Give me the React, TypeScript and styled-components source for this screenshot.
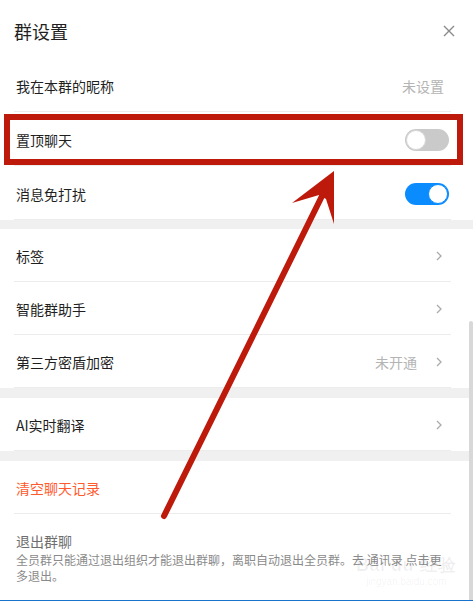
import React from "react";
import styled, { createGlobalStyle } from "styled-components";

const GlobalStyle = createGlobalStyle`
  html, body { margin: 0; padding: 0; background: #fff; }
  body { font-family: "Noto Sans CJK SC", "Noto Sans", sans-serif; }
`;

const Page = styled.div`
  position: relative;
  width: 473px;
  height: 601px;
  overflow: hidden;
  background: #fff;
  display: flex;
  flex-direction: column;
`;

const Header = styled.header`
  height: 58px;
  box-sizing: border-box;
  padding: 4px 18px 0 14px;
  display: flex;
  align-items: center;
  justify-content: space-between;
`;

const Title = styled.h1`
  margin: 0;
  font-size: 18px;
  font-weight: 400;
  line-height: 24px;
  color: #1f1f1f;
`;

const CloseButton = styled.button`
  border: 0;
  background: none;
  padding: 0;
  width: 12px;
  height: 12px;
  display: flex;
  cursor: pointer;
`;

const Section = styled.section`
  background: #fff;
  display: flex;
  flex-direction: column;
`;

const Band = styled.div<{ $h: number }>`
  height: ${(p) => p.$h}px;
  background: #f0f0f0;
  flex: none;
`;

const Row = styled.div<{ $compact?: boolean }>`
  margin: 0 22px 0 14px;
  padding: 2px 2px 0 2px;
  box-sizing: content-box;
  height: ${(p) => (p.$compact ? 50 : 51)}px;
  border-bottom: 1px solid #ececec;
  display: flex;
  align-items: center;
  justify-content: space-between;
`;

const Label = styled.span<{ $tone?: "danger" }>`
  font-size: 14px;
  line-height: 20px;
  color: ${(p) => (p.$tone === "danger" ? "#ff5a2e" : "#1f1f1f")};
`;

const Side = styled.div`
  display: flex;
  align-items: center;
`;

const Value = styled.span<{ $gap: number }>`
  font-size: 14px;
  line-height: 20px;
  color: #b4b4b4;
  margin-right: ${(p) => p.$gap}px;
`;

const Chevron = styled.svg`
  width: 6px;
  height: 10px;
  margin-right: 7px;
  display: block;
`;

const Track = styled.div<{ $on: boolean }>`
  width: 44px;
  height: 22px;
  border-radius: 11px;
  box-sizing: border-box;
  background: ${(p) => (p.$on ? "#0a8cff" : "#cacaca")};
  display: flex;
  justify-content: ${(p) => (p.$on ? "flex-end" : "flex-start")};
  align-items: center;
  padding: 1px;
`;

const Knob = styled.div<{ $on: boolean }>`
  width: 20px;
  height: 20px;
  border-radius: 50%;
  box-sizing: border-box;
  background: #fff;
  border: 1px solid ${(p) => (p.$on ? "#0a8cff" : "#d8d8d8")};
`;

const ExitBlock = styled.div`
  margin: 0 22px 0 16px;
  padding-top: 17px;
  display: flex;
  flex-direction: column;
`;

const ExitTitle = styled.div`
  font-size: 14px;
  line-height: 20px;
  color: #6e6e6e;
`;

const ExitDesc = styled.p`
  margin: 1px 0 0;
  width: 432px;
  font-size: 12px;
  line-height: 16px;
  color: #8a8a8a;
`;

const TaskLine = styled.div`
  margin-top: auto;
  height: 1px;
  background: #1b72cc;
  flex: none;
`;

const Scrollbar = styled.div`
  position: absolute;
  right: 0;
  top: 321px;
  bottom: 1px;
  width: 4px;
  background: #d8d8d8;
  border-radius: 2px 2px 0 0;
`;

const Watermark = styled.div`
  position: absolute;
  left: 356px;
  top: 554px;
  display: flex;
  flex-direction: column;
  align-items: center;
  color: rgba(0, 0, 0, 0.06);
  font-family: "Liberation Sans", sans-serif;
  pointer-events: none;
`;

const WatermarkLogo = styled.span`
  font-size: 18px;
  font-weight: 700;
  line-height: 22px;
  letter-spacing: 0.5px;
`;

const WatermarkUrl = styled.span`
  font-size: 10px;
  line-height: 12px;
`;

const Annotation = styled.svg`
  position: absolute;
  left: 0;
  top: 0;
  width: 473px;
  height: 601px;
  pointer-events: none;
`;

const Switch = ({ on }: { on: boolean }) => (
  <Track $on={on}>
    <Knob $on={on} />
  </Track>
);

const Arrow = () => (
  <Chevron viewBox="0 0 6 10">
    <path d="M1 1l4 4-4 4" fill="none" stroke="#ababab" strokeWidth="1.3" />
  </Chevron>
);

export default function App() {
  return (
    <>
      <GlobalStyle />
      <Page>
        <Header>
          <Title>群设置</Title>
          <CloseButton aria-label="关闭">
            <svg width="12" height="12" viewBox="0 0 12 12">
              <path d="M1 1l10 10M11 1L1 11" stroke="#8a8a8a" strokeWidth="1.4" fill="none" />
            </svg>
          </CloseButton>
        </Header>

        <Section>
          <Row>
            <Label>我在本群的昵称</Label>
            <Side>
              <Value $gap={5}>未设置</Value>
            </Side>
          </Row>
          <Row>
            <Label>置顶聊天</Label>
            <Switch on={false} />
          </Row>
          <Row>
            <Label>消息免打扰</Label>
            <Switch on={true} />
          </Row>
        </Section>
        <Band $h={9} />

        <Section>
          <Row $compact>
            <Label>标签</Label>
            <Arrow />
          </Row>
          <Row $compact>
            <Label>智能群助手</Label>
            <Arrow />
          </Row>
          <Row $compact>
            <Label>第三方密盾加密</Label>
            <Side>
              <Value $gap={19}>未开通</Value>
              <Arrow />
            </Side>
          </Row>
        </Section>
        <Band $h={10} />

        <Section>
          <Row $compact>
            <Label>AI实时翻译</Label>
            <Arrow />
          </Row>
        </Section>
        <Band $h={10} />

        <Section>
          <Row $compact>
            <Label $tone="danger">清空聊天记录</Label>
          </Row>
          <ExitBlock>
            <ExitTitle>退出群聊</ExitTitle>
            <ExitDesc>
              全员群只能通过退出组织才能退出群聊，离职自动退出全员群。去 通讯录 点击更多退出。
            </ExitDesc>
          </ExitBlock>
        </Section>

        <TaskLine />
        <Scrollbar />
        <Watermark>
          <WatermarkLogo>Bai du 经验</WatermarkLogo>
          <WatermarkUrl>jingyan.baidu.com</WatermarkUrl>
        </Watermark>

        <Annotation viewBox="0 0 473 601">
          <rect x="7" y="117" width="453" height="45" fill="none" stroke="#bd1a0b" strokeWidth="6" />
          <line x1="164" y1="516" x2="322" y2="196" stroke="#bd1a0b" strokeWidth="6" strokeLinecap="round" />
          <polygon points="334,171 292,203 319,195 326,199 334,224" fill="#bd1a0b" />
        </Annotation>
      </Page>
    </>
  );
}
